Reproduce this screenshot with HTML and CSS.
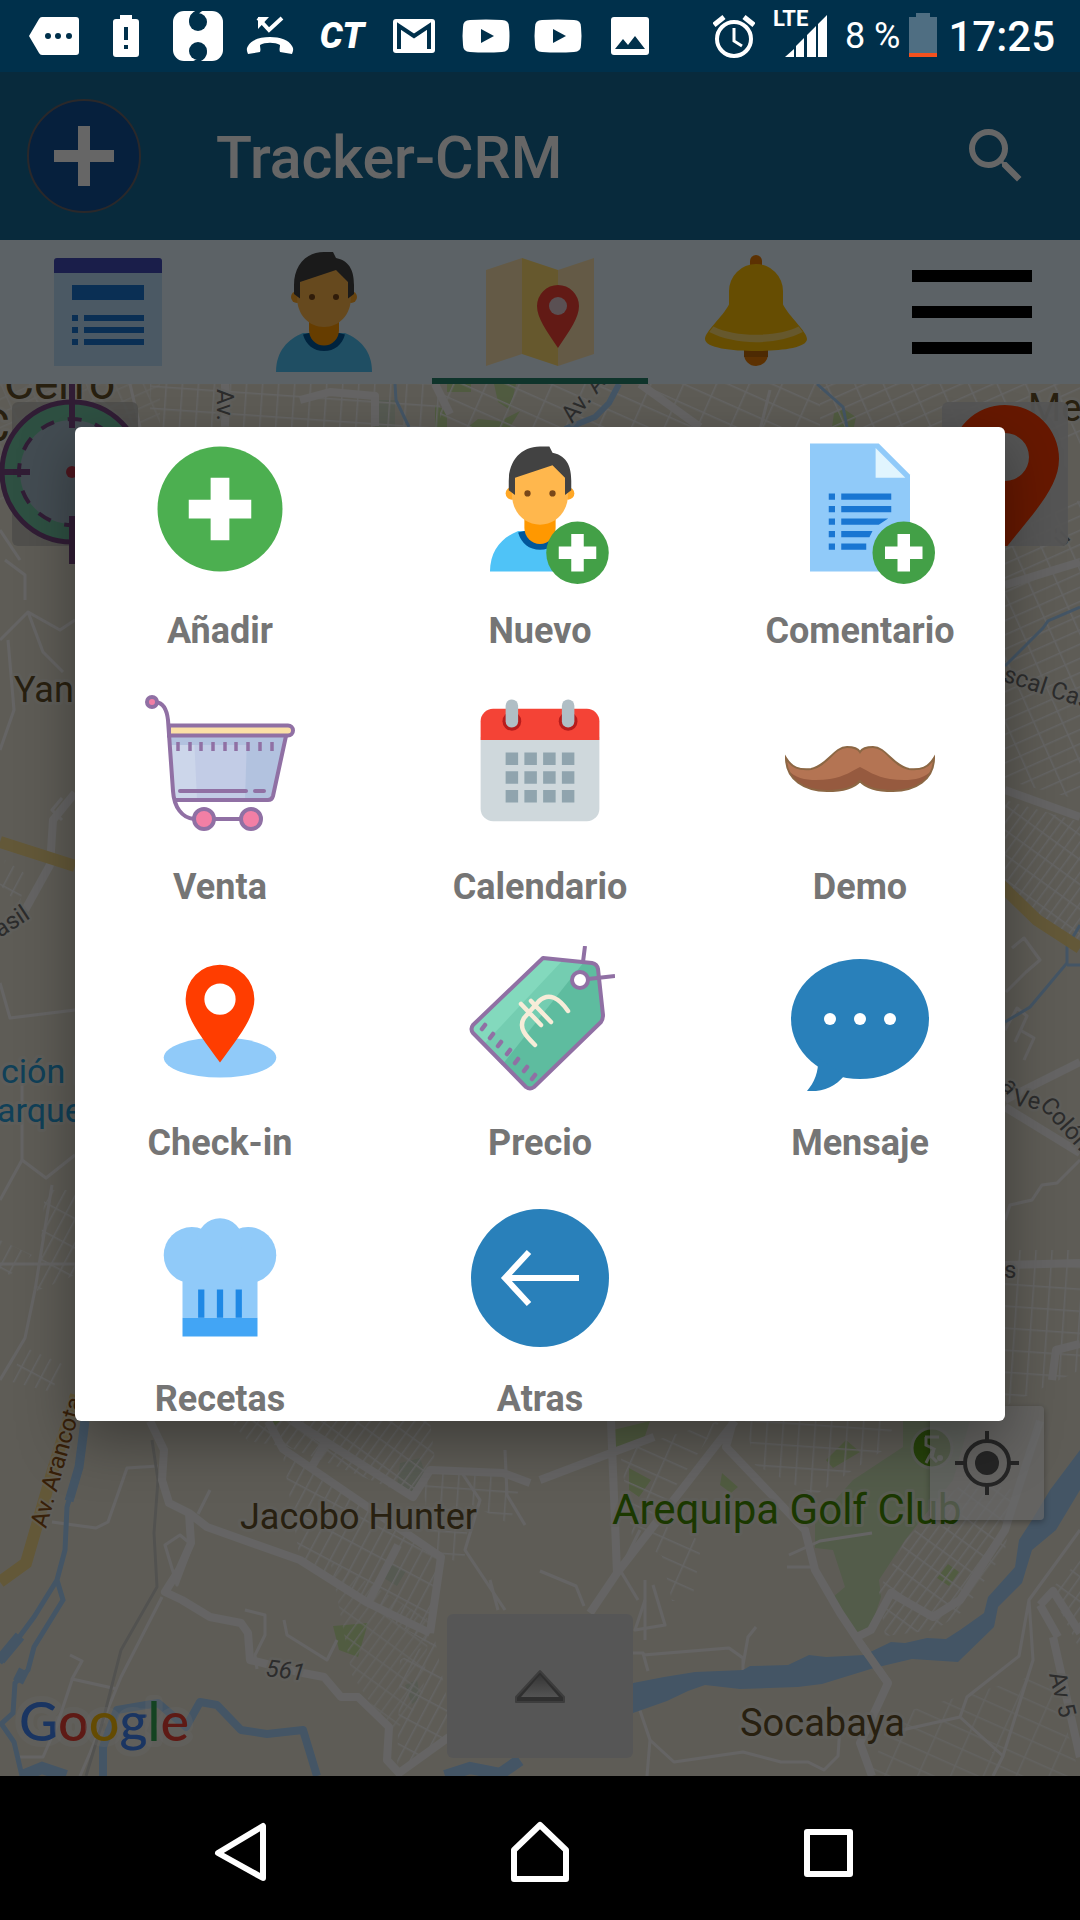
FILE: index.html
```html
<!DOCTYPE html>
<html lang="es">
<head>
<meta charset="utf-8">
<meta name="viewport" content="width=device-width">
<title>Tracker-CRM</title>
<link rel="stylesheet" href="styles.css">
</head>
<body>
<header class="status">
  <div class="status-left">
    <svg viewBox="0 0 72 72"><path d="M24 17h34a3 3 0 0 1 3 3v32a3 3 0 0 1-3 3H24q-2 0-3-2L11 36l10-17q1-2 3-2z" fill="#fff"/><g fill="#00304b"><circle cx="30" cy="36" r="3"/><circle cx="40" cy="36" r="3"/><circle cx="51" cy="36" r="3"/></g></svg>
    <svg viewBox="0 0 72 72"><path d="M30 15h12v4h4a3 3 0 0 1 3 3v32a3 3 0 0 1-3 3H26a3 3 0 0 1-3-3V22a3 3 0 0 1 3-3h4z" fill="#fff"/><path d="M34 27h4v13h-4zM34 45h4v4h-4z" fill="#00304b"/></svg>
    <svg viewBox="0 0 72 72"><rect x="11" y="11" width="50" height="50" rx="11" fill="#fff"/><g fill="#00304b"><circle cx="36" cy="22" r="9"/><circle cx="36" cy="51" r="9"/><path d="M27 22q0-9 8-12h8q-7 2-8 8zM45 51q0 8-8 11h-9q9-2 9-7z"/></g></svg>
    <svg viewBox="0 0 72 72"><path d="M24 18l11 12 13-12" fill="none" stroke="#fff" stroke-width="4"/><path d="M24 29V17h11z" fill="#fff"/><path d="M36 37c10 0 19 3 22 9 2 3 1 5 0 8l-12-2c-1-3 0-4 0-7-5-3-15-3-20 0 0 3 1 4 0 7l-12 2c-1-3-2-5 0-8 3-6 12-9 22-9z" fill="#fff"/></svg>
    <span class="ct">CT</span>
    <svg viewBox="0 0 72 72"><rect x="15" y="19" width="42" height="34" rx="3" fill="#fff"/><path d="M21 49V26l15 10 15-10v23" fill="none" stroke="#00304b" stroke-width="4"/></svg>
    <svg viewBox="0 0 72 72"><path d="M20 20q16-1 32 0 7 0 7 7 1 9 0 18 0 7-7 7-16 1-32 0-7 0-7-7-1-9 0-18 0-7 7-7z" fill="#fff"/><path d="M31 29l13 7-13 7z" fill="#00304b"/></svg>
    <svg viewBox="0 0 72 72"><path d="M20 20q16-1 32 0 7 0 7 7 1 9 0 18 0 7-7 7-16 1-32 0-7 0-7-7-1-9 0-18 0-7 7-7z" fill="#fff"/><path d="M31 29l13 7-13 7z" fill="#00304b"/></svg>
    <svg viewBox="0 0 72 72"><rect x="17" y="17" width="38" height="38" rx="3" fill="#fff"/><path d="M21 49l8-10 5 6 7-9 10 13z" fill="#00304b"/></svg>
  </div>
  <div class="status-right">
    <svg class="alarm" viewBox="0 0 42 72"><g fill="none" stroke="#fff"><circle cx="21" cy="39" r="17" stroke-width="4"/><path d="M21 28v13l8 5" stroke-width="3"/><path d="M1 25l10-8M41 25l-10-8" stroke-width="5"/></g></svg>
    <span class="signal"><svg viewBox="0 0 44 72"><path d="M0 57l9-8v8zM11 57V46l8-8v19zM22 57V35l9-9v31zM33 57V24l9-9v42z" fill="#fff"/></svg><b class="lte">LTE</b></span>
    <span class="pct">8 %</span>
    <svg class="batt" viewBox="0 0 28 72"><path d="M7 13h14v4h7v36H0V17h7z" fill="#4f6e82"/><path d="M0 53h28v4H0z" fill="#f4511e"/></svg>
    <time class="clock">17:25</time>
  </div>
</header>

<main class="app">
  <div class="toolbar">
    <button class="add" aria-label="Añadir nuevo"><svg viewBox="0 0 114 114"><circle cx="57" cy="57" r="56" fill="#0f5098" stroke="#696469" stroke-width="2"/><path d="M51 27h12v24h24v12H63v24H51V63H27V51h24z" fill="#fff"/></svg></button>
    <h1>Tracker-CRM</h1>
    <button class="search" aria-label="Buscar"><svg viewBox="0 0 24 24"><path fill="#fff" d="M15.500 14h-.79l-.28-.27A6.470 6.470 0 0 0 16 9.500 6.500 6.500 0 1 0 9.500 16c1.610 0 3.090-.59 4.230-1.570l.27.28v.79l5 4.990L20.490 19l-4.990-5zm-6 0C7.010 14 5 11.990 5 9.500S7.010 5 9.500 5 14 7.010 14 9.500 11.990 14 9.500 14z"/></svg></button>
  </div>
  <nav class="tabs">
    <button aria-label="Notas"><svg viewBox="0 0 48 48"><path d="M6 10h36v32H6z" fill="#bbdefb"/><path d="M7 6h34a1 1 0 0 1 1 1v4H6V7a1 1 0 0 1 1-1z" fill="#414bb9"/><path d="M12 15h24v5H12zM12 25h2v2h-2zM16 25h20v2H16zM12 29h2v2h-2zM16 29h20v2H16zM12 33h2v2h-2zM16 33h20v2H16z" fill="#1976d2"/></svg></button>
    <button aria-label="Contactos"><svg viewBox="0 0 48 48"><use href="#person"/></svg></button>
    <button class="active" aria-label="Mapa"><svg viewBox="0 0 48 48"><path d="M6 10l12-4v32L6 42zM30 10l12-4v32l-12 4z" fill="#fae1af"/><path d="M18 6l12 4v32l-12-4z" fill="#ffdc70"/><path d="M23 22a7 7 0 0 1 14 0c0 4-3 8-7 14-4-6-7-10-7-14z" fill="#f44336"/><circle cx="30" cy="22" r="3" fill="#e1c8d0"/></svg></button>
    <button aria-label="Avisos"><svg viewBox="0 0 48 48"><rect x="22" y="5" width="4" height="6" rx="2" fill="#e67c05"/><path d="M20 37h8v1a4 4 0 0 1-8 0z" fill="#e67c05"/><path d="M20 36h8v3h-8z" fill="#c06a08"/><path d="M15 17a9 9 0 0 1 18 0v4.500c2 4 8 9 8 11.500 0 3-9 4-17 4S7 36 7 33c0-2.500 6-7.500 8-11.500z" fill="#ffc107"/><path d="M9.800 28.800C17 32.500 31 32.500 38.200 28.800l1.400 1.900C31 35.200 17 35.200 8.400 30.700z" fill="#ffdc70"/></svg></button>
    <button aria-label="Menú"><svg viewBox="0 0 48 48"><path d="M4 10h40v4H4zM4 22h40v4H4zM4 34h40v4H4z"/></svg></button>
  </nav>

  <section class="map">
    <svg class="tiles" viewBox="0 384 1080 1392" preserveAspectRatio="xMidYMid slice">
      <defs>
        <pattern id="g1" width="11" height="26" patternUnits="userSpaceOnUse" patternTransform="rotate(28)"><path d="M0 0h11M0 0v26" class="fine"/></pattern>
        <pattern id="g2" width="26" height="13" patternUnits="userSpaceOnUse" patternTransform="rotate(-24)"><path d="M0 0h26M0 0v13" class="fine"/></pattern>
        <pattern id="g3" width="30" height="18" patternUnits="userSpaceOnUse" patternTransform="rotate(24)"><path d="M0 0h30M0 0v18" class="fine"/></pattern>
        <pattern id="g4" width="9" height="20" patternUnits="userSpaceOnUse" patternTransform="rotate(36)"><path d="M0 0h9M0 0v20" class="fine"/></pattern>
        <pattern id="g5" width="16" height="22" patternUnits="userSpaceOnUse" patternTransform="rotate(4)"><path d="M0 0h16M0 0v22" class="fine"/></pattern>
      </defs>
      <path d="M0 384h1080v1392H0z" fill="#ebe7d8"/>
      <g class="park">
        <path d="M447 384h24v8h-24zM494 384h22l-6 26-12-8zM435 405l12 6v16h-12zM468 427l10-8 22 2 20-10-10 16zM832 427l2-14 10-4 12 8-2 10z"/>
        <path d="M268 1421h12l-8 7zM333 1626l35-3-10 34-19-7zM613 1430l37-9-7 21-30 9zM629 1468l22 12-12 17-10-7zM722 1473l16 14-7 6-11-8zM846 1440l14 12-27 16-7-8zM948 1564l11 8-10 14-12-8z"/>
      </g>
      <path d="M903 1421v26l-50 33-38 43v25l18 2 12 37-12 10 7 16 17 19 14-5 10-30-2-17 26-40 48-60 17-59z" fill="#cfe6b8"/>
      <path d="M389 1563l17 8-9 15-15-9zM400 1463l20-5 5 15-14 20-14-8zM405 1685l12-5 3 18-8 6zM375 400h20v27h-20z" fill="#d6e0cc"/>
      <g stroke="none">
        <path d="M0 384h160v120H0z" fill="url(#g2)" opacity=".6"/><path d="M150 384h290v43H150z" fill="url(#g5)"/><path d="M440 384h380v43H440z" fill="url(#g3)"/><path d="M820 384h260v60H820z" fill="url(#g2)"/>
        <path d="M1005 530l75-30v300l-75-20z" fill="url(#g2)"/><path d="M1005 800l75 22v120l-75-50z" fill="url(#g4)"/>
        <path d="M1005 1250h75v120l-75 36z" fill="url(#g5)"/><path d="M5 860l22 15-8 30-19-20zM45 1190h30v85l-38 16zM0 1240l32 15-22 20-10-4zM22 1346l40 18-10 28-40-10z" fill="url(#g1)"/>
        <path d="M230 1421h200l5 40-22 36-125-50-40-6z" fill="url(#g4)"/><path d="M282 1450l159 107-11 88-62-40-68-45z" fill="url(#g1)"/><path d="M420 1470h60l40 14-10 40-40-20-6 60-30-10z" fill="url(#g5)"/>
        <path d="M330 1560l100 60-8 80-30 35-40-60z" fill="url(#g4)" opacity=".7"/><path d="M400 1660l35-20 12 60v40l-50 32z" fill="url(#g1)"/>
        <path d="M620 1451l100-30-68 100 50 20-10 60h-20l-10-45-30-20z" fill="url(#g3)"/><path d="M745 1421h150l-10 28-70 46-60-30z" fill="url(#g5)"/>
        <path d="M879 1590l26-50 60-60 50 10-10 60-40 60-30 20-50 6z" fill="url(#g4)"/><path d="M1020 1680l30-10 30 106H870l20-60z" fill="url(#g3)" opacity=".7"/><path d="M1050 1590l30-30v90z" fill="url(#g4)"/>
      </g>
      <g class="road thin">
        <path d="M158 1466l-31 2-19 54-12 6-44-6M162 1597l-41 80-31 76-10 23M210 1490l-12 24M165 1545l15-10 12 10-15 40zM70 1655l12 6-10 18 45 10M72 1680l-15 45-14 32H15M245 1610l20 5v20l-10 20 2 14M284 1620l3 15 40 25 10-20M0 983l10 35 65-8M22 1080v80l24 18 29-23M22 1160l-22 40M0 1264h75M52 1185l-17 105-10 48-25 42M0 530l20 30M0 640l28-28 32 18 15-10M8 640l6 70-14 40M28 612l15 40 20 20M5 560l20 15v25M62 820l-10-10 10-12"/>
        <path d="M1005 1220l5-15 22-5 10-15 15-2 23-23M1005 1030l12-22 10 8-12 26M1012 948l12-10 16 22-14 12-20 20M1020 1030l14 8-10 22M540 1571l36 15 8 20M629 1653h14l5 18M643 1655l86-7 14 10v14M743 1665l5-28 8-10M647 1776l3-36-17-50M650 1740l24 22 69-10 38 10h27l16 8 14-14 2-30M789 1555l31-14 52-8M787 1567h25M1080 1530l-51 70-10 56-52 41-7 20-58 13M1029 1600l4 60-30 96-10 20M1003 1756l-42-38M645 1600l-10 30 30-5-12-40M460 1470l20 30-15 50 40 60M490 1580l8 30M505 1450l2 45 18 30"/>
        <path d="M645 1580v60M640 1530l-20 40 18 30M100 400l30 27M130 384l10 43M760 430l10-40"/>
      </g>
      <path class="rail" d="M152 1440l6 40-4 53 3 54-36 63-18 70-17 56"/>
      <g class="road wide">
        <path d="M150 1421l14 29-2 30 7 23 20 10 18 14 93 33 68 43 62 30M189 1513l2 30-12 27-14 22 17 8 28 17 31 6 7 10 2 27 53 13 21 4 17 20h17l31 30-2 33 12 13 50-36M293 1421l120 76 17-27 73 3 27 10M268 1421l15 28 158 108-11 76M327 1440l-17 30M398 1545l-30 58"/>
        <path d="M611 1421l6 152M733 1421l-7 26 79 83 10 40 25 43 20 30 28 40-11 24-17 36 12 33M735 1421l-118 152-27 40M540 1480l71-27 43-16M857 1637l14-7 20-37 42 24 27-17 45-70 35-109M1053 1637l27 120M1040 1605l13-14 27 42M1040 1605l18 32"/>
        <path d="M1005 585l75-23M1005 790l75 27M1005 1100l25-13 50-25M1005 1107l75 46M1005 1265l75-2M1052 1380l4-30 24-6M25 910l25-45 3-45 22-27M300 400l30-8 45 4v30M435 384l15 30M640 384l60 43M225 384v43"/>
      </g>
      <g class="water">
        <path d="M83 1421l-4 46-12 40-2 43-8 30-23 37-34 46M57 1580l6 20-29 47-6 23-13 13-2 30-13 12M0 1722l14 20 8 34" stroke-width="5"/>
        <path d="M85 1421l-6 46-10 34" stroke-width="9"/><path d="M0 1660l20-24M24 1670l-6 12" stroke-width="11"/>
        <path d="M103 1776v-29l14-37 41-7 28 24 14-25 17 3 24 25 26 4 36-4 14 46" stroke-width="8" stroke-linejoin="round"/>
        <path d="M22 1776l20-8 24 8M445 1776l25-8 30 6 20-14" stroke-width="12"/>
        <path d="M395 384l1 16 13 27M817 384l26 23 4 20M1005 666l38-38 5-7 32-14M1005 1022l25-15 37-44v-16l13-22M1067 965h13" stroke-width="3"/><path d="M619 384l-10 19-14 14-30 12" stroke-width="6"/>
      </g>
      <path fill="#aad4fc" d="M633 1683l31-6 31-5 48-2 7-4 38-1 21-10 17 2 38-2 27-13 14 1 22-5 19 1 14-9 24-17 4-16 27-30 4-27 13-20 18-30 30-40v40l-24 40-24 20-10 33-24 24-4 20-36 35-46-3-38 9-52 16-24 3-58 2-35-4-17 6-21 10-34 12z"/>
      <g class="yellow"><path d="M76 1395l-24 78-26 90-26 19M0 842l75 24M1000 884l37 36 43 28"/></g>
      <path class="road wide" d="M860 1643l28 40"/>
      <circle cx="932" cy="1448" r="20" fill="#5fa519" stroke="#dfe8d5" stroke-width="3"/><path d="M925 1437h14M926 1437v8l8 4-5 8-3 6M934 1449l-2 8 5 5" stroke="#e8efdf" stroke-width="3" fill="none"/><circle cx="940" cy="1458" r="3" fill="#e8efdf"/>
      <g class="place">
        <text x="4" y="399" font-size="46">Cerro</text><text x="-20" y="442" font-size="46">C</text><text x="1028" y="421" font-size="38">Me</text>
        <text x="14" y="702" font-size="36">Yan</text><text x="240" y="1529" font-size="36">Jacobo Hunter</text><text x="740" y="1736" font-size="38">Socabaya</text>
      </g>
      <text class="golf" x="612" y="1524" font-size="42">Arequipa Golf Club</text>
      <g class="station"><text x="1" y="1083" font-size="34">ción l</text><text x="-3" y="1122" font-size="34">arque</text></g>
      <g class="street" font-size="24">
        <text transform="translate(217 389) rotate(90)">Av. C</text><text transform="translate(572 424) rotate(-50)">Av. Ar</text>
        <text transform="translate(0 938) rotate(-33)">asil</text><text transform="translate(1002 681) rotate(18)">scal Cas</text>
        <text transform="translate(1000 1086) rotate(50)">a</text><text transform="translate(1012 1105) rotate(10)">Ve</text><text transform="translate(1039 1106) rotate(48)">Colón</text>
        <text x="1004" y="1278">s</text><text transform="translate(1062 548) rotate(-45)">ú</text>
        <text transform="translate(265 1676) rotate(7)" font-style="italic">561</text><text transform="translate(1049 1674) rotate(76)">Av 5</text>
      </g>
      <text class="avenue" transform="translate(46 1529) rotate(-74)" font-size="24">Av. Arancota</text>
      <text class="google" x="19" y="1741" font-size="54"><tspan fill="#4285f4">G</tspan><tspan fill="#ea4335">o</tspan><tspan fill="#fbbc05">o</tspan><tspan fill="#4285f4">g</tspan><tspan fill="#34a853">l</tspan><tspan fill="#ea4335">e</tspan></text>
    </svg>
    <button class="map-btn target" aria-label="Centrar"><svg viewBox="0 0 144 180"><circle cx="72" cy="88" r="70" fill="#73c9a6" stroke="#7a4a86" stroke-width="5"/><circle cx="72" cy="88" r="52" fill="#a9bfcc"/><circle cx="72" cy="88" r="53" fill="none" stroke="#7a4a86" stroke-width="4" stroke-dasharray="14 14" stroke-dashoffset="7"/><path d="M72 0v44M72 132v48M0 88h30M144 88h-30" stroke="#7a4a86" stroke-width="6"/><circle cx="72" cy="88" r="6" fill="#c0394b"/></svg></button>
    <button class="map-btn pin" aria-label="Marcador"><svg viewBox="0 0 126 144"><path d="M9 57a54 54 0 0 1 108 0c0 28-24 52-54 90C33 109 9 85 9 57zm54-26a24 24 0 1 0 0 48 24 24 0 0 0 0-48z" fill="#ff3d00" fill-rule="evenodd"/></svg></button>
    <button class="locate" aria-label="Mi ubicación"><svg viewBox="0 0 72 72"><g fill="none" stroke="#5c5c5c" stroke-width="4"><circle cx="36" cy="36" r="22"/><path d="M36 4v10M36 58v10M4 36h10M58 36h10"/></g><circle cx="36" cy="36" r="12" fill="#5c5c5c"/></svg></button>
    <button class="expand" aria-label="Desplegar"><svg viewBox="0 0 56 40"><defs><linearGradient id="arrow" x1="0" y1="0" x2="0" y2="1"><stop offset="0" stop-color="#888"/><stop offset="1" stop-color="#d0d0d0"/></linearGradient></defs><path d="M28 5L52 31v5H4v-5z" fill="#777" stroke="#999" stroke-width="2" stroke-linejoin="round"/><path d="M28 9L47 31H9z" fill="url(#arrow)"/></svg></button>
  </section>

  <div class="scrim">
    <div class="dialog" role="dialog" aria-label="Acciones">
      <button><svg viewBox="0 0 48 48"><circle cx="24" cy="24" r="20" fill="#4caf50"/><path d="M21 14h6v7h7v6h-7v7h-6v-7h-7v-6h7z" fill="#fff"/></svg><span>Añadir</span></button>
      <button><svg viewBox="0 0 48 48"><g id="person"><path d="M8 44c0-7 4-11 9-13h14c5 2 9 6 9 13z" fill="#4fc3f7"/><path d="M17 31.500C18 35 20.500 37 24 37s6-2 7-5.500L29 31H19z" fill="#01579b"/><path d="M19 27h10v3a5 5.200 0 0 1-10 0z" fill="#ff9800"/><circle cx="15" cy="19" r="2" fill="#ffa726"/><circle cx="33" cy="19" r="2" fill="#ffa726"/><path d="M15 12c0-7 18-8 18 0v7c0 6-4 10-9 10s-9-4-9-10z" fill="#ffb74d"/><path d="M24 4c-6 0-10 4.500-10 11v3l2 1.500V14l12-4 4 4v5.500l2-1.500v-3c0-4-1-8-6-9l-1-2z" fill="#424242"/><circle cx="20" cy="19" r="1" fill="#784719"/><circle cx="28" cy="19" r="1" fill="#784719"/></g><g id="badge"><circle cx="36" cy="38" r="10" fill="#43a047"/><path d="M34 32h4v4h4v4h-4v4h-4v-4h-4v-4h4z" fill="#fff"/></g></svg><span>Nuevo</span></button>
      <button><svg viewBox="0 0 48 48"><path d="M8 3h22l10 10v31H8z" fill="#90caf9"/><path d="M29 4.500V14h9.500z" fill="#e1f5fe"/><path d="M14 19h2v2h-2zM18 19h16v2H18zM14 23h2v2h-2zM18 23h16v2H18zM14 27h2v2h-2zM18 27h15l-3 2H18zM14 31h2v2h-2zM18 31h10l-1 2h-9zM14 35h2v2h-2zM18 35h8v2h-8z" fill="#1976d2"/><use href="#badge" x="2"/></svg><span>Comentario</span></button>
      <button><svg viewBox="0 0 150 150"><path d="M25 46h116l-14 64H30z" fill="#c2cce6"/><path d="M25 46h24l3 64H30z" fill="#ccd6ea"/><path d="M102 46h39l-14 64h-27z" fill="#b2c2df"/><path d="M25 46h116l-2 9H25z" fill="#b2c2df"/><g fill="none" stroke="#9070a4" stroke-width="4"><path d="M11 12c8 1 11 9 12 18l5 71c1 16 9 27 21 28h57M29 110h94q4 0 5-4l13-60"/><path d="M24 35.500h119a5 5 0 0 1 0 10H24z" fill="#fbe0a6"/><path d="M33 52v9M45 52v9M56 52v9M68 52v9M80 52v9M91 52v9M103 52v9M115 52v9M127 52v9" stroke-width="3.500"/><path d="M35 101h66M110 101h9" stroke-linecap="round"/><circle cx="7" cy="12" r="5" fill="#f27fa5"/><circle cx="59" cy="129" r="10" fill="#f27fa5"/><circle cx="106" cy="129" r="10" fill="#f27fa5"/></g></svg><span>Venta</span></button>
      <button><svg viewBox="0 0 48 48"><path d="M5 15h38v23a4 4 0 0 1-4 4H9a4 4 0 0 1-4-4z" fill="#cfd8dc"/><path d="M9 6h30a4 4 0 0 1 4 4v6H5v-6a4 4 0 0 1 4-4z" fill="#f44336"/><g fill="#b71c1c"><circle cx="15" cy="10" r="3"/><circle cx="33" cy="10" r="3"/></g><rect x="13" y="3" width="4" height="9" rx="2" fill="#b0bec5"/><rect x="31" y="3" width="4" height="9" rx="2" fill="#b0bec5"/><path d="M13 20h4v4h-4zM19 20h4v4h-4zM25 20h4v4h-4zM31 20h4v4h-4zM13 26h4v4h-4zM19 26h4v4h-4zM25 26h4v4h-4zM31 26h4v4h-4zM13 32h4v4h-4zM19 32h4v4h-4zM25 32h4v4h-4zM31 32h4v4h-4z" fill="#90a4ae"/></svg><span>Calendario</span></button>
      <button><svg viewBox="0 0 150 150"><path d="M1 68C7 78 14 80 26 79 42 76 49 57 62 57q10 0 13 5 3-5 13-5c13 0 20 19 36 22 12 1 19-1 25-11 0 22-19 33-41 33-18 0-28-4-33-10-5 6-15 10-33 10C20 101 1 90 1 68z" fill="#b47453"/><path d="M3 80c9 11 27 11 42 9 14-2 24-9 30-12 6 3 16 10 30 12 15 2 33 2 42-9-5 13-21 21-39 21-18 0-28-4-33-10-5 6-15 10-33 10C24 101 8 93 3 80z" fill="#965a3f"/><path d="M1 68C7 78 14 80 26 79 42 76 49 57 62 57q10 0 13 5 3-5 13-5c13 0 20 19 36 22 12 1 19-1 25-11 0 22-19 33-41 33-18 0-28-4-33-10-5 6-15 10-33 10C20 101 1 90 1 68z" fill="none" stroke="#8c6744" stroke-width="2"/></svg><span>Demo</span></button>
      <button><svg viewBox="0 0 48 48"><ellipse cx="24" cy="35.700" rx="18" ry="6.400" fill="#90caf9"/><path d="M13 17a11 11 0 0 1 22 0c0 6-5 12-11 20.300C18 29 13 23 13 17zm11-5a5 5 0 1 0 0 10 5 5 0 0 0 0-10z" fill="#ff3d00" fill-rule="evenodd"/></svg><span>Check-in</span></button>
      <button><svg viewBox="0 0 150 150"><path d="M78 12l49 5q5 1 6 6l5 46q0 4-2 7l-67 65q-4 3-8 0L8 87q-3-4 0-8z" fill="#5ebc9f"/><path d="M78 12l41 4-82 103L8 87q-3-4 0-8z" fill="#74cdb1"/><path d="M78 12l20 2L20 97 8 87q-3-4 0-8z" fill="#83d9bd"/><g fill="none" stroke="#9070a4" stroke-width="4" stroke-linejoin="round"><path d="M78 12l49 5q5 1 6 6l5 46q0 4-2 7l-67 65q-4 3-8 0L8 87q-3-4 0-8z"/><path d="M120 0l-2 16M123 33l27-3"/><circle cx="115" cy="34" r="8" fill="#fff"/><path d="M17 83l3-4M25 92l3-4M33 100l3-4M42 108l3-4M50 117l3-4M59 125l3-4M67 133l3-4" stroke-width="4.500" stroke-linecap="round"/></g><path d="M103 65C94 52 84 46 74 55L59 72c-6 10 2 18 11 27M56 58l20 21M66 55l20 21" fill="none" stroke="#f7ecd8" stroke-width="4.500" stroke-linecap="round"/></svg><span>Precio</span></button>
      <button><svg viewBox="0 0 150 150"><ellipse cx="75" cy="73" rx="69" ry="60" fill="#2980ba"/><path d="M33 112c1 14-4 25-11 33 16 1 28-4 38-16z" fill="#2980ba"/><g fill="#fff"><circle cx="45" cy="73" r="6"/><circle cx="75" cy="73" r="6"/><circle cx="105" cy="73" r="6"/></g></svg><span>Mensaje</span></button>
      <button><svg viewBox="0 0 48 48"><g fill="#90caf9"><circle cx="15" cy="17" r="9"/><circle cx="33" cy="17" r="9"/><circle cx="24" cy="12.500" r="7.300"/><path d="M12 18h24v19H12z"/></g><path d="M12 37h24v6H12z" fill="#42a5f5"/><path d="M17 28h2v9h-2zM23 28h2v9h-2zM29 28h2v9h-2z" fill="#1e88e5"/></svg><span>Recetas</span></button>
      <button><svg viewBox="0 0 150 150"><circle cx="75" cy="76" r="69" fill="#2980ba"/><path d="M114 76H40M64 50L40 76l24 26" fill="none" stroke="#fff" stroke-width="6"/></svg><span>Atras</span></button>
    </div>
  </div>
</main>

<footer class="navbar">
  <button aria-label="Atrás"><svg viewBox="0 0 96 96"><path d="M65 26v52L20 53z" class="line"/></svg></button>
  <button aria-label="Inicio"><svg viewBox="0 0 96 96"><path d="M22 50l26-25 26 25v29H22z" class="line"/></svg></button>
  <button aria-label="Recientes"><svg viewBox="0 0 96 96"><path d="M21 32h43v42H21z" class="line"/></svg></button>
</footer>
</body>
</html>
```
FILE: styles.css
```css
* { box-sizing: border-box; }
body {
  margin: 0;
  min-height: 100vh;
  display: flex;
  flex-direction: column;
  background: #000;
  font-family: Roboto, "Noto Sans", sans-serif;
}
button {
  border: 0;
  padding: 0;
  margin: 0;
  background: none;
  font: inherit;
  color: inherit;
}
svg { display: block; }

.status {
  height: 72px;
  padding: 0 25px 0 18px;
  display: flex;
  justify-content: space-between;
  background: #00304b;
  color: #fff;
}
.status-left, .status-right { display: flex; align-items: center; }
.status-left svg { width: 72px; height: 72px; }
.status-right > svg, .signal svg { height: 72px; }
.ct {
  width: 72px;
  text-align: center;
  font: italic 900 36px/72px Roboto, sans-serif;
}
.alarm { width: 42px; }
.signal { position: relative; margin-left: 30px; }
.signal svg { width: 44px; }
.lte {
  position: absolute;
  left: -12px;
  top: 7px;
  font-size: 22px;
  line-height: 24px;
  font-weight: 700;
}
.pct { font-size: 36px; margin-left: 16px; }
.batt { width: 28px; margin-left: 9px; }
.clock { font-size: 42px; font-weight: 500; margin-left: 11px; }

.app {
  flex: 1;
  position: relative;
  display: flex;
  flex-direction: column;
}
.toolbar {
  height: 168px;
  padding: 0 48px 0 27px;
  display: flex;
  align-items: center;
  background: #166996;
}
.toolbar h1 {
  flex: 1;
  margin: 0 0 0 75px;
  padding-top: 3px;
  font-size: 59px;
  font-weight: 500;
  color: #fff;
}
.add svg { width: 114px; }
.search svg { width: 72px; }

.tabs {
  height: 144px;
  display: grid;
  grid-template-columns: repeat(5, 1fr);
  background: #e6f5ff;
}
.tabs button {
  display: flex;
  justify-content: center;
}
.tabs svg { width: 144px; height: 144px; }
.tabs .active { box-shadow: inset 0 -6px #26836b; }

.map {
  flex: 1;
  min-height: 1100px;
  position: relative;
  overflow: hidden;
}
.tiles {
  position: absolute;
  inset: 0;
  width: 100%;
  height: 100%;
}
.fine { stroke: #fcfbfa; stroke-width: 3; fill: none; }
.road { fill: none; stroke: #fcfbfa; stroke-linejoin: round; }
.thin { stroke-width: 3; }
.wide { stroke-width: 8; }
.rail { fill: none; stroke: #cecdc8; stroke-width: 3; }
.water { fill: none; stroke: #aad4fc; }
.park { fill: #cbe6a3; }
.yellow { fill: none; stroke: #f7dc8c; stroke-width: 12; }
.place, .golf, .street, .station, .avenue {
  paint-order: stroke;
  stroke: #f0eee6;
  stroke-opacity: 0.6;
  stroke-width: 6;
  stroke-linejoin: round;
}
.place { fill: #645028; }
.golf { fill: #448c00; }
.street { fill: #6e6e6e; stroke-width: 5; }
.station { fill: #28a0dc; }
.avenue { fill: #8c5014; stroke-width: 4; }
.google {
  font-family: Lato, sans-serif;
  font-weight: 500;
  paint-order: stroke;
  stroke: #fff;
  stroke-opacity: 0.3;
  stroke-width: 12;
  stroke-linejoin: round;
}

.map-btn {
  position: absolute;
  top: 18px;
  width: 126px;
  height: 144px;
  border-radius: 6px;
  background: rgba(212, 212, 212, 0.95);
}
.target { left: 12px; background: rgba(190, 190, 185, 0.8); }
.target svg {
  position: absolute;
  left: -12px;
  top: -18px;
  width: 144px;
}
.pin { right: 12px; overflow: hidden; }
.locate {
  position: absolute;
  right: 36px;
  bottom: 256px;
  width: 114px;
  height: 114px;
  border-radius: 4px;
  background: rgba(255, 255, 255, 0.7);
  box-shadow: 0 2px 6px rgba(0, 0, 0, 0.3);
}
.locate svg { width: 72px; margin: 0 auto; }
.expand {
  position: absolute;
  left: 50%;
  bottom: 18px;
  transform: translateX(-50%);
  width: 186px;
  height: 144px;
  border-radius: 6px;
  background: #d7d7d7;
}
.expand svg { width: 56px; margin: 0 auto; }

.scrim {
  position: absolute;
  inset: 0;
  display: flex;
  align-items: center;
  justify-content: center;
  padding: 0 75px;
  background: rgba(0, 0, 0, 0.6);
}
.dialog {
  width: 100%;
  padding: 7px 0 1px;
  display: grid;
  grid-template-columns: repeat(3, 1fr);
  gap: 38px 30px;
  border-radius: 6px;
  background: #fff;
  box-shadow: 0 20px 56px rgba(0, 0, 0, 0.35);
  color: #757575;
}
.dialog button {
  display: flex;
  flex-direction: column;
  align-items: center;
  gap: 26px;
}
.dialog svg { width: 150px; height: 150px; }
.dialog span { font-size: 36px; line-height: 42px; font-weight: 700; }

.navbar {
  height: 144px;
  display: flex;
  justify-content: center;
  align-items: center;
  gap: 198px;
  background: #000;
}
.navbar svg { width: 96px; height: 96px; }
.line {
  fill: none;
  stroke: #fff;
  stroke-width: 6;
  stroke-linejoin: round;
}
```
